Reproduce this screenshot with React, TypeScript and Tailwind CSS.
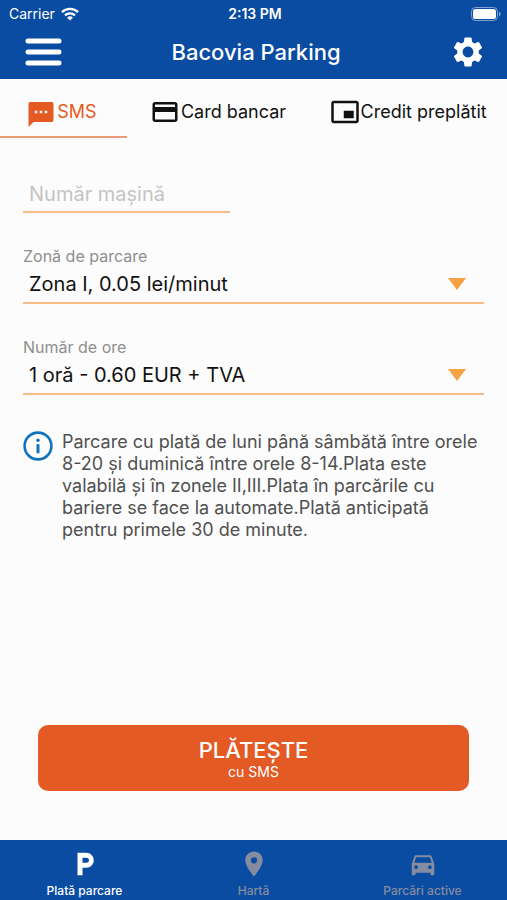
import { useState } from 'react'
import type { ReactNode } from 'react'
import clsx from 'clsx'
import {
  MdCreditCard,
  MdDirectionsCar,
  MdLocalParking,
  MdLocationOn,
  MdPictureInPictureAlt,
  MdSettings,
} from 'react-icons/md'

type TabId = 'sms' | 'card' | 'credit'

// same bubble as MdSms, but centred on its body instead of on its tail
function SmsIcon() {
  return (
    <svg viewBox="0 -2 24 24" className="size-[30px]" fill="currentColor">
      <path d="M20.5 2H3.5C2.7 2 2 2.7 2 3.5V22l4-4h14.5c.8 0 1.5-.7 1.5-1.5v-13c0-.8-.7-1.5-1.5-1.5zM9 11H7V9h2v2zm4 0h-2V9h2v2zm4 0h-2V9h2v2z" />
    </svg>
  )
}

const tabs: { id: TabId; label: string; icon: ReactNode; className: string }[] = [
  { id: 'sms', label: 'SMS', icon: <SmsIcon />, className: 'w-1/4 pr-1' },
  { id: 'card', label: 'Card bancar', icon: <MdCreditCard className="size-[30px]" />, className: 'w-[36%]' },
  { id: 'credit', label: 'Credit preplătit', icon: <MdPictureInPictureAlt className="size-[30px]" />, className: 'flex-1' },
]

const navItems = [
  { id: 'pay', label: 'Plată parcare', icon: MdLocalParking },
  { id: 'map', label: 'Hartă', icon: MdLocationOn },
  { id: 'active', label: 'Parcări active', icon: MdDirectionsCar },
]

function StatusBar() {
  return (
    <div className="grid grid-cols-3 items-center h-[27px] pl-[9px] pr-[6px] text-sm leading-5">
      <div className="flex items-center gap-[6px]">
        <span>Carrier</span>
        <svg viewBox="0 0 18 14" className="w-[18px] h-[14px]" fill="none" stroke="currentColor" strokeWidth="2.4">
          <path d="M1 5.2a11.4 11.4 0 0 1 16 0" />
          <path d="M4 8.4a7.1 7.1 0 0 1 10 0" />
          <path d="M9 13.6 6.1 10.7a4.1 4.1 0 0 1 5.8 0z" fill="currentColor" stroke="none" />
        </svg>
      </div>
      <span className="text-center font-semibold">2:13 PM</span>
      <svg viewBox="0 0 30 14" className="w-[30px] h-[14px] justify-self-end">
        <rect x="0.5" y="0.5" width="26" height="13" rx="4" fill="none" stroke="#7fa0d2" />
        <rect x="2" y="2" width="23" height="10" rx="2.6" fill="#fff" />
        <path d="M28 4.6c1 .4 1.6 1.3 1.6 2.4s-.6 2-1.6 2.4z" fill="#7fa0d2" />
      </svg>
    </div>
  )
}

function SelectField({ id, label, options }: { id: string; label: string; options: string[] }) {
  return (
    <div className="flex flex-col">
      <label htmlFor={id} className="text-base leading-5 text-[#8e8e8e]">{label}</label>
      <div className="relative">
        <select
          id={id}
          className="block w-full h-[38px] appearance-none rounded-none border-b-2 border-[#f6bd86] bg-transparent pl-[6px] pr-12 text-xl text-[#111] outline-none"
        >
          {options.map((option) => (
            <option key={option}>{option}</option>
          ))}
        </select>
        <svg viewBox="0 0 18 12" className="pointer-events-none absolute right-[18px] top-3 w-[18px] h-3">
          <path d="M0 0h18L9 12z" fill="#f7a145" />
        </svg>
      </div>
    </div>
  )
}

export default function App() {
  const [tab, setTab] = useState<TabId>('sms')
  const [page, setPage] = useState('pay')
  const [plate, setPlate] = useState('')

  return (
    <div className="flex flex-col min-h-screen bg-[#fcfcfc] font-['Inter',sans-serif]">
      <header className="bg-[#0a4ca1] text-white">
        <StatusBar />
        <div className="flex items-center justify-between h-[52px] pl-[25px] pr-[21px] pb-[2px]">
          <button type="button" aria-label="Meniu">
            <svg viewBox="0 0 37 28" className="block w-[37px] h-7" fill="none" stroke="currentColor" strokeWidth="5" strokeLinecap="round">
              <path d="M3 3h31M3 14h31M3 25h31" />
            </svg>
          </button>
          <h1 className="text-[22px] leading-7 font-medium">Bacovia Parking</h1>
          <button type="button" aria-label="Setări">
            <MdSettings className="size-9" />
          </button>
        </div>
      </header>

      <div role="tablist" className="flex h-[59px]">
        {tabs.map((t) => (
          <button
            key={t.id}
            type="button"
            role="tab"
            aria-selected={tab === t.id}
            onClick={() => setTab(t.id)}
            className={clsx(
              'flex items-center justify-center gap-px border-b-2 pt-2 text-lg whitespace-nowrap',
              t.className,
              tab === t.id ? 'border-[#ef9a77] text-[#e45a24]' : 'border-transparent text-[#111]',
            )}
          >
            {t.icon}
            <span>{t.label}</span>
          </button>
        ))}
      </div>

      <main className="flex flex-col flex-1 pt-[39px] px-[23px]">
        <div className="flex flex-col gap-[33px]">
          <input
            type="text"
            aria-label="Număr mașină"
            placeholder="Număr mașină"
            value={plate}
            onChange={(e) => setPlate(e.target.value)}
            className="w-[45%] h-9 border-b-2 border-[#f6bd86] bg-transparent pl-[6px] text-xl text-[#111] outline-none placeholder:text-[#c4c4c4]"
          />
          <SelectField id="zone" label="Zonă de parcare" options={['Zona I, 0.05 lei/minut']} />
          <SelectField id="hours" label="Număr de ore" options={['1 oră - 0.60 EUR + TVA']} />
        </div>

        <div className="flex gap-[9px] mt-9">
          <svg viewBox="0 0 30 30" className="shrink-0 size-[30px]" fill="none" stroke="#1273bd">
            <circle cx="15" cy="15" r="13.4" strokeWidth="2.6" />
            <path d="M15 13.2v9" strokeWidth="3" />
            <circle cx="15" cy="9.2" r="1.7" fill="#1273bd" stroke="none" />
          </svg>
          <p className="text-lg leading-[22px] text-[#505050]">
            Parcare cu plată de luni până sâmbătă între orele 8-20 și duminică între orele 8-14.Plata este valabilă și în zonele II,III.Plata în parcările cu bariere se face la automate.Plată anticipată pentru primele 30 de minute.
          </p>
        </div>

        <button
          type="button"
          className="flex flex-col items-center justify-center h-[66px] mt-auto mb-[49px] mx-[15px] pt-[3px] rounded-[10px] bg-[#e45a24] text-white"
        >
          <span className="text-[22px] leading-6 font-medium">PLĂTEȘTE</span>
          <span className="text-sm leading-5">cu SMS</span>
        </button>
      </main>

      <nav className="grid grid-cols-3 h-[60px] bg-[#0a4ca1]">
        {navItems.map(({ id, label, icon: Icon }) => (
          <button
            key={id}
            type="button"
            onClick={() => setPage(id)}
            className={clsx(
              'flex flex-col items-center justify-end gap-1 pb-px',
              page === id ? 'text-white' : 'text-[#858c9f]',
            )}
          >
            <Icon className="size-[30px]" />
            <span className="text-xs leading-4 font-medium">{label}</span>
          </button>
        ))}
      </nav>
    </div>
  )
}
